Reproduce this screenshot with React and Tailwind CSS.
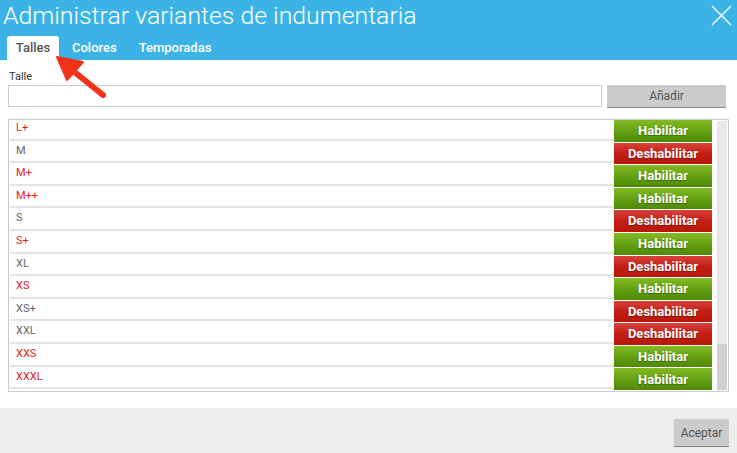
import React from 'react'

const talles = [
  { name: 'L+', enabled: false },
  { name: 'M', enabled: true },
  { name: 'M+', enabled: false },
  { name: 'M++', enabled: false },
  { name: 'S', enabled: true },
  { name: 'S+', enabled: false },
  { name: 'XL', enabled: true },
  { name: 'XS', enabled: false },
  { name: 'XS+', enabled: true },
  { name: 'XXL', enabled: true },
  { name: 'XXS', enabled: false },
  { name: 'XXXL', enabled: false },
]

function Row({ item }) {
  return (
    <div className="flex h-[22.6px] items-stretch">
      <div className="flex flex-1 items-center border-b-2 border-[#e4e4e4] pl-[6px] text-[11px]">
        <span className={item.enabled ? 'text-[#666]' : 'text-[#e0201c]'}>{item.name}</span>
      </div>
      <div className="w-[98px] border-b-[1.5px] border-white">
        {item.enabled ? (
          <button className="h-full w-full bg-gradient-to-b from-[#d9403a] via-[#c21d12] to-[#b81808] text-[13px] font-bold text-white [text-shadow:0_1px_1px_rgba(0,0,0,0.35)]">
            Deshabilitar
          </button>
        ) : (
          <button className="h-full w-full bg-gradient-to-b from-[#85bb23] via-[#64a012] to-[#4e8a06] text-[13px] font-bold text-white [text-shadow:0_1px_1px_rgba(0,0,0,0.35)]">
            Habilitar
          </button>
        )}
      </div>
      <div className="w-[5px]" />
    </div>
  )
}

export default function App() {
  return (
    <div className="relative h-[453px] w-[737px] overflow-hidden bg-white font-['Roboto','Liberation_Sans',sans-serif]">
      {/* header */}
      <div className="relative h-[60px] bg-[#3bb3e6]">
        <div className="pl-[3px] pt-[1px] text-[24.8px] font-light leading-[30px] text-white">
          Administrar variantes de indumentaria
        </div>
        <svg className="absolute right-[5px] top-[5px]" width="21" height="21" viewBox="0 0 21 21">
          <path d="M1 1 L20 20 M20 1 L1 20" stroke="#e8f6fd" strokeWidth="1.6" fill="none" />
        </svg>
        <div className="mt-[5px] flex items-end pl-[7px] text-[13px] font-medium">
          <div className="flex h-[24px] w-[52px] items-center justify-center rounded-t-[3px] bg-white text-[#555]">
            Talles
          </div>
          <div className="flex h-[24px] items-center pl-[13px] pr-[22px] text-white">Colores</div>
          <div className="flex h-[24px] items-center text-white">Temporadas</div>
        </div>
      </div>

      {/* body */}
      <div className="h-[348px] px-[8px] pt-[10px]">
        <div className="pl-[1px] text-[11px] leading-[14px] text-[#333]">Talle</div>
        <div className="mt-[1px] flex h-[22px] gap-[5px]">
          <input className="h-full w-[594px] border border-[#ccc] bg-white outline-none" />
          <button className="h-full w-[119px] bg-[#cbcbcb] text-[12px] text-[#555] shadow-[0_1px_0_#888]">
            Añadir
          </button>
        </div>
        <div className="mt-[12px] flex h-[273px] border border-[#ccc] pl-[1px]">
          <div className="flex-1 overflow-hidden">
            <div className="-mt-[2px]">
              {talles.map((t) => (
                <Row key={t.name} item={t} />
              ))}
            </div>
          </div>
          <div className="my-[1px] mr-[1px] flex w-[10px] flex-col bg-[#e8e8e8]">
            <div className="flex-1" />
            <div className="h-[46px] bg-[#cfcfcf]" />
          </div>
        </div>
      </div>

      {/* footer */}
      <div className="flex h-[45px] items-start justify-end bg-[#ededed] pr-[8px] pt-[11px]">
        <button className="h-[27px] w-[55px] bg-[#cbcbcb] text-[12px] text-[#555] shadow-[0_1px_0_#888]">
          Aceptar
        </button>
      </div>

      {/* arrow annotation */}
      <svg className="absolute left-0 top-0" width="120" height="110" viewBox="0 0 120 110">
        <path d="M103 95 L72 70" stroke="#f2331a" strokeWidth="6" strokeLinecap="round" fill="none" />
        <path d="M57 57 L83 62 L67 80 Z" fill="#f2331a" stroke="#f2331a" strokeWidth="2" strokeLinejoin="round" />
      </svg>
    </div>
  )
}
